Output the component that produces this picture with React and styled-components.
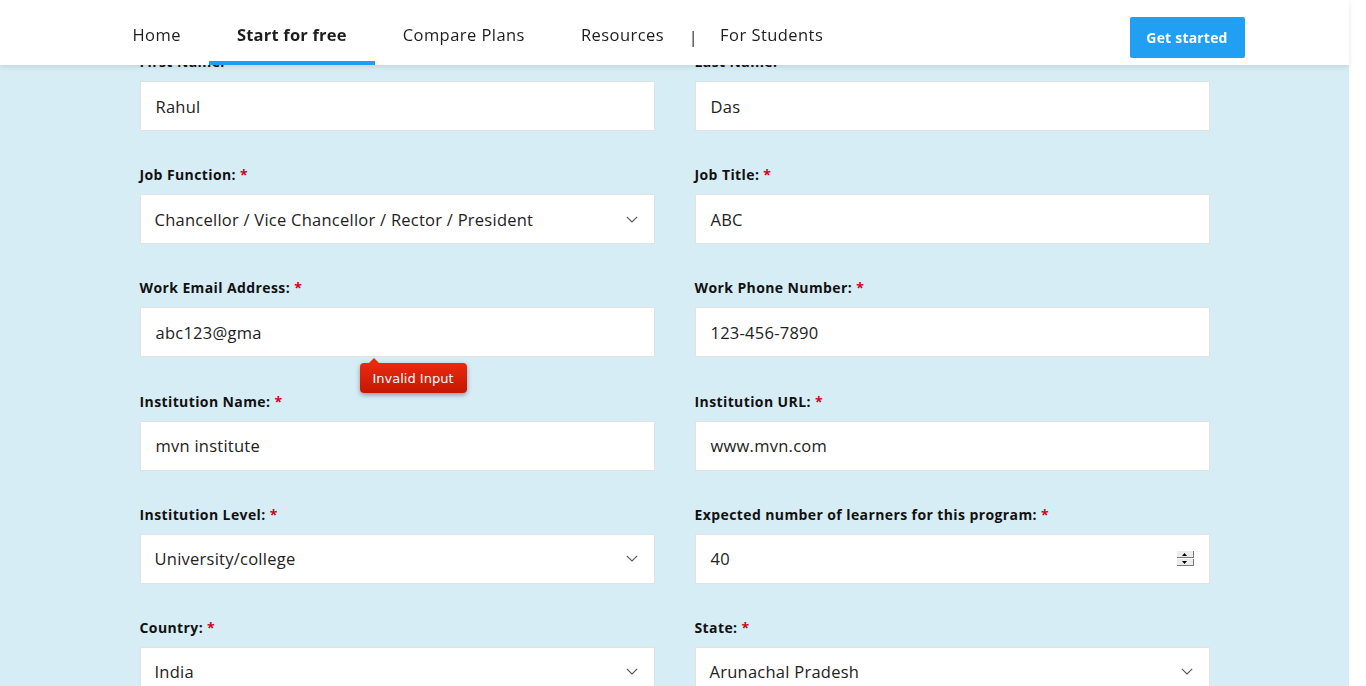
import styled, { createGlobalStyle } from "styled-components"

const GlobalStyle = createGlobalStyle`
  html, body {
    margin: 0;
    padding: 0;
    overflow: hidden;
    background: #ffffff;
  }
  body {
    font-family: "Open Sans", "Liberation Sans", sans-serif;
    color: #1d1d1d;
  }
  * { box-sizing: border-box; }
`

const Page = styled.div`
  width: 1349px;
  height: 686px;
  background: #d7edf5;
  overflow: hidden;
`

const Header = styled.header`
  position: fixed;
  top: 0;
  left: 0;
  width: 1349px;
  height: 65px;
  background: #ffffff;
  box-shadow: 0 2px 5px rgba(0, 0, 0, 0.1);
  z-index: 10;
  display: flex;
  justify-content: center;
`

const HeaderInner = styled.div`
  width: 1140px;
  display: flex;
  align-items: center;
`

const Nav = styled.nav`
  display: flex;
  align-items: stretch;
  height: 65px;
`

const NavItem = styled.a`
  display: flex;
  align-items: center;
  padding: 3px 28px 0;
  font-size: 16.5px;
  letter-spacing: ${(p) => (p.$active ? "0.2px" : "0.45px")};
  color: #1d1d1d;
  font-weight: ${(p) => (p.$active ? 700 : 400)};
  box-shadow: ${(p) => (p.$active ? "inset 0 -4px 0 #1f9ef1" : "none")};
  cursor: pointer;
`

const Divider = styled.span`
  display: flex;
  align-items: center;
  justify-content: center;
  width: 2px;
  margin-right: -2px;
  font-size: 16px;
  padding-top: 8px;
  color: #222;
`

const CtaButton = styled.button`
  margin-left: auto;
  margin-top: 10px;
  width: 115px;
  height: 41px;
  border: none;
  border-radius: 2px;
  background: #21a0f3;
  color: #ffffff;
  font-family: inherit;
  font-weight: 700;
  font-size: 14px;
  letter-spacing: 0.2px;
  cursor: pointer;
`

const Form = styled.form`
  width: 1070px;
  margin: 0 auto;
  padding-top: 52px;
  display: grid;
  grid-template-columns: 515px 515px;
  column-gap: 40px;
  row-gap: 34.2px;
`

const Field = styled.div`
  position: relative;
`

const Label = styled.label`
  display: block;
  font-size: 14px;
  line-height: 20px;
  font-weight: 700;
  letter-spacing: 0.4px;
  color: #111;
  margin-bottom: 9px;
`

const Star = styled.span`
  color: #d0021b;
  margin-left: 4px;
`

const Box = styled.div`
  height: 50px;
  background: #ffffff;
  border: 1px solid #e2e2e2;
  padding: 0 15px 0 ${(p) => (p.$select ? "14px" : "15px")};
  display: flex;
  align-items: center;
  justify-content: space-between;
  font-size: 16.5px;
  letter-spacing: 0.25px;
  color: #222;
`

const Chevron = styled.svg`
  width: 12px;
  height: 7px;
  margin-right: 1px;
`

const Spinner = styled.div`
  display: flex;
  flex-direction: column;
  gap: 1px;
`

const SpinBtn = styled.div`
  width: 17px;
  height: 7px;
  background: #ececec;
  border-right: 1px solid #7a7a7a;
  border-bottom: 1px solid #7a7a7a;
  display: flex;
  align-items: center;
  justify-content: center;
`

const Tip = styled.div`
  position: absolute;
  left: 220px;
  top: 85px;
  width: 107px;
  height: 30px;
  border-radius: 4px;
  background: linear-gradient(#ea2a10, #c31800);
  box-shadow: 0 2px 5px rgba(0, 0, 0, 0.35);
  color: #ffffff;
  font-family: "DejaVu Sans", sans-serif;
  font-size: 13px;
  display: flex;
  align-items: center;
  justify-content: center;
  z-index: 2;

  &::before {
    content: "";
    position: absolute;
    top: -5px;
    left: 9px;
    border-left: 5px solid transparent;
    border-right: 5px solid transparent;
    border-bottom: 5px solid #ea2a10;
  }
`

const ChevronIcon = () => (
  <Chevron viewBox="0 0 12 7">
    <polyline points="0.8,0.8 6,6 11.2,0.8" fill="none" stroke="#555" strokeWidth="1.1" />
  </Chevron>
)

const NumberSpinner = () => (
  <Spinner>
    <SpinBtn>
      <svg width="5" height="3" viewBox="0 0 5 3"><polygon points="2.5,0 5,3 0,3" fill="#000" /></svg>
    </SpinBtn>
    <SpinBtn>
      <svg width="5" height="3" viewBox="0 0 5 3"><polygon points="0,0 5,0 2.5,3" fill="#000" /></svg>
    </SpinBtn>
  </Spinner>
)

const fields = [
  { label: "First Name:", value: "Rahul" },
  { label: "Last Name:", value: "Das" },
  { label: "Job Function:", value: "Chancellor / Vice Chancellor / Rector / President", select: true, req: true },
  { label: "Job Title:", value: "ABC", req: true },
  { label: "Work Email Address:", value: "abc123@gma", req: true, error: "Invalid Input" },
  { label: "Work Phone Number:", value: "123-456-7890", req: true },
  { label: "Institution Name:", value: "mvn institute", req: true },
  { label: "Institution URL:", value: "www.mvn.com", req: true },
  { label: "Institution Level:", value: "University/college", select: true, req: true },
  { label: "Expected number of learners for this program:", value: "40", number: true, req: true },
  { label: "Country:", value: "India", select: true, req: true },
  { label: "State:", value: "Arunachal Pradesh", select: true, req: true },
]

const App = () => {
  return (
    <Page>
      <GlobalStyle />
      <Header>
        <HeaderInner>
          <Nav>
            <NavItem>Home</NavItem>
            <NavItem $active>Start for free</NavItem>
            <NavItem>Compare Plans</NavItem>
            <NavItem>Resources</NavItem>
            <Divider>|</Divider>
            <NavItem>For Students</NavItem>
          </Nav>
          <CtaButton type="button">Get started</CtaButton>
        </HeaderInner>
      </Header>
      <Form>
        {fields.map((f) => (
          <Field key={f.label}>
            <Label>
              {f.label}
              {f.req && <Star>*</Star>}
            </Label>
            <Box $select={f.select}>
              <span>{f.value}</span>
              {f.select && <ChevronIcon />}
              {f.number && <NumberSpinner />}
            </Box>
            {f.error && <Tip>{f.error}</Tip>}
          </Field>
        ))}
      </Form>
    </Page>
  )
}

export default App
